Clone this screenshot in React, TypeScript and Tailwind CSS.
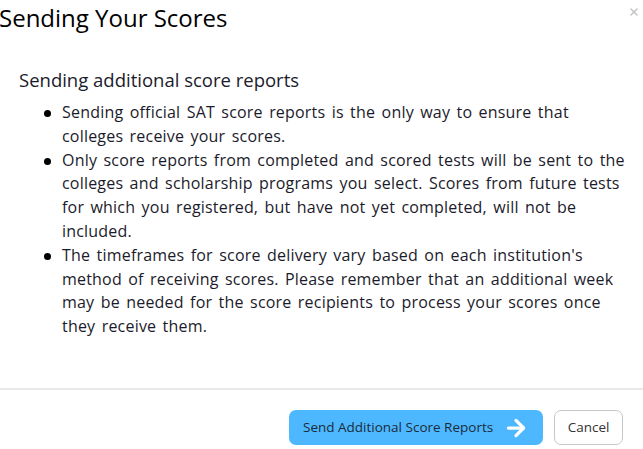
import React from "react";
import { ArrowRight, X } from "lucide-react";

const points = [
  "Sending official SAT score reports is the only way to ensure that colleges receive your scores.",
  "Only score reports from completed and scored tests will be sent to the colleges and scholarship programs you select. Scores from future tests for which you registered, but have not yet completed, will not be included.",
  "The timeframes for score delivery vary based on each institution's method of receiving scores. Please remember that an additional week may be needed for the score recipients to process your scores once they receive them.",
];

export default function App() {
  return (
    <div
      className="relative w-[643px] h-[449px] overflow-hidden bg-white text-[#1b1b2b] flex flex-col"
      style={{ fontFamily: "'Open Sans', 'Noto Sans', sans-serif" }}
    >
      {/* Header */}
      <div className="h-[38px] -ml-[1px]">
        <h2 className="text-[24px] leading-[36px] font-normal text-black whitespace-nowrap">
          Sending Your Scores
        </h2>
      </div>
      <button className="absolute top-[6px] right-[3px] text-[#c4c4c4]">
        <X className="w-[12px] h-[12px]" strokeWidth={3} />
      </button>

      {/* Body */}
      <div className="flex-grow pl-[19px] pt-[30px]">
        <h3 className="text-[18.5px] leading-[24px] mb-[9px]">
          Sending additional score reports
        </h3>
        <ul className="list-none p-0 m-0 text-[16px] leading-[23.8px] tracking-[0.2px] [word-spacing:2px]">
          {points.map((p, idx) => (
            <li key={idx} className="flex items-start">
              <span className="w-[7px] h-[7px] rounded-full bg-black mt-[9px] ml-[25px] mr-[11px] flex-shrink-0" />
              <span className="w-[572px]">{p}</span>
            </li>
          ))}
        </ul>
      </div>

      {/* Footer */}
      <div className="border-t-2 border-[#e8e8e8] h-[61px] flex items-start justify-end gap-[11px] pr-[20px] pt-[20px]">
        <button className="h-[35px] w-[254px] rounded-[7px] bg-[#4db8ff] flex items-center justify-between pl-[14px] pr-[14px] text-[13.5px] text-[#1c2b3a] whitespace-nowrap">
          <span>Send Additional Score Reports</span>
          <ArrowRight className="w-[26px] h-[26px] text-white" strokeWidth={3} />
        </button>
        <button className="h-[35px] w-[69px] rounded-[7px] border border-[#c8c8c8] bg-white text-[13.5px] text-[#333]">
          Cancel
        </button>
      </div>
    </div>
  );
}
